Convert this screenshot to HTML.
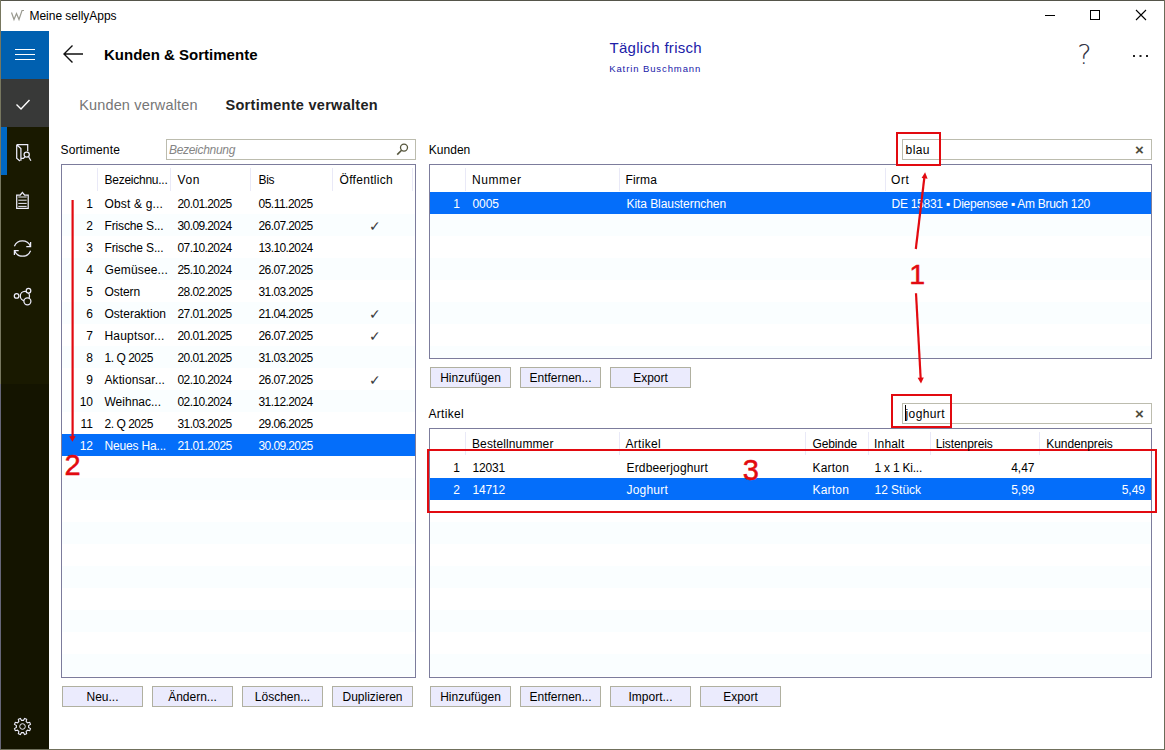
<!DOCTYPE html>
<html lang="de"><head><meta charset="utf-8"><title>Meine sellyApps</title>
<style>
html,body{margin:0;padding:0;}
body{width:1165px;height:750px;position:relative;overflow:hidden;background:#fff;font-family:"Liberation Sans", sans-serif;}
.a{position:absolute;}
.t{position:absolute;white-space:nowrap;line-height:1;}
svg{position:absolute;left:0;top:0;}
</style></head><body>
<div class="a" style="left:0px;top:0px;width:1165px;height:1px;background:#55554a;"></div>
<div class="a" style="left:0px;top:0px;width:1px;height:384px;background:#77775f;"></div>
<div class="a" style="left:0px;top:384px;width:1px;height:366px;background:#666678;"></div>
<div class="a" style="left:1164px;top:0px;width:1px;height:750px;background:#6b6b58;"></div>
<div class="a" style="left:0px;top:749px;width:1165px;height:1px;background:#70705c;"></div>
<div class="a" style="left:1px;top:31px;width:48px;height:48px;background:#0060b0;"></div>
<div class="a" style="left:1px;top:79px;width:48px;height:48px;background:#383938;"></div>
<div class="a" style="left:1px;top:127px;width:48px;height:257px;background:#191900;"></div>
<div class="a" style="left:1px;top:384px;width:48px;height:365px;background:#141400;"></div>
<div class="a" style="left:1px;top:127px;width:6px;height:48px;background:#0068c4;"></div>
<div class="a" style="left:166px;top:139px;width:250px;height:21px;background:#fff;border:1px solid #bcbcae;box-sizing:border-box;"></div>
<div class="a" style="left:61px;top:164px;width:355px;height:514px;background:#fff;border:1px solid #7c7c9c;box-sizing:border-box;"></div>
<div class="a" style="left:62px;top:214px;width:353px;height:22px;background:#fafeff;"></div>
<div class="a" style="left:62px;top:258px;width:353px;height:22px;background:#fafeff;"></div>
<div class="a" style="left:62px;top:302px;width:353px;height:22px;background:#fafeff;"></div>
<div class="a" style="left:62px;top:346px;width:353px;height:22px;background:#fafeff;"></div>
<div class="a" style="left:62px;top:390px;width:353px;height:22px;background:#fafeff;"></div>
<div class="a" style="left:62px;top:434px;width:353px;height:22px;background:#fafeff;"></div>
<div class="a" style="left:62px;top:478px;width:353px;height:22px;background:#fafeff;"></div>
<div class="a" style="left:62px;top:522px;width:353px;height:22px;background:#fafeff;"></div>
<div class="a" style="left:62px;top:566px;width:353px;height:22px;background:#fafeff;"></div>
<div class="a" style="left:62px;top:610px;width:353px;height:22px;background:#fafeff;"></div>
<div class="a" style="left:62px;top:654px;width:353px;height:22px;background:#fafeff;"></div>
<div class="a" style="left:62px;top:434px;width:353px;height:22px;background:#046efa;"></div>
<div class="a" style="left:97px;top:168px;width:1px;height:23px;background:#e9e9f7;"></div>
<div class="a" style="left:170px;top:168px;width:1px;height:23px;background:#e9e9f7;"></div>
<div class="a" style="left:250px;top:168px;width:1px;height:23px;background:#e9e9f7;"></div>
<div class="a" style="left:332px;top:168px;width:1px;height:23px;background:#e9e9f7;"></div>
<div class="a" style="left:412px;top:168px;width:1px;height:23px;background:#e9e9f7;"></div>
<div class="a" style="left:62px;top:686px;width:81px;height:21px;background:#ebebfd;border:1px solid #b0b0a0;box-sizing:border-box;"></div>
<div class="a" style="left:152px;top:686px;width:81px;height:21px;background:#ebebfd;border:1px solid #b0b0a0;box-sizing:border-box;"></div>
<div class="a" style="left:242px;top:686px;width:81px;height:21px;background:#ebebfd;border:1px solid #b0b0a0;box-sizing:border-box;"></div>
<div class="a" style="left:332px;top:686px;width:81px;height:21px;background:#ebebfd;border:1px solid #b0b0a0;box-sizing:border-box;"></div>
<div class="a" style="left:902px;top:139px;width:250px;height:21px;background:#fff;border:1px solid #bcbcae;box-sizing:border-box;"></div>
<div class="a" style="left:429px;top:164px;width:723px;height:195px;background:#fff;border:1px solid #7c7c9c;box-sizing:border-box;"></div>
<div class="a" style="left:430px;top:214px;width:721px;height:22px;background:#fafeff;"></div>
<div class="a" style="left:430px;top:258px;width:721px;height:22px;background:#fafeff;"></div>
<div class="a" style="left:430px;top:302px;width:721px;height:22px;background:#fafeff;"></div>
<div class="a" style="left:430px;top:346px;width:721px;height:12px;background:#fafeff;"></div>
<div class="a" style="left:430px;top:192px;width:721px;height:22px;background:#046efa;"></div>
<div class="a" style="left:465px;top:168px;width:1px;height:23px;background:#e9e9f7;"></div>
<div class="a" style="left:619px;top:168px;width:1px;height:23px;background:#e9e9f7;"></div>
<div class="a" style="left:885px;top:168px;width:1px;height:23px;background:#e9e9f7;"></div>
<div class="a" style="left:430px;top:367px;width:81px;height:21px;background:#ebebfd;border:1px solid #b0b0a0;box-sizing:border-box;"></div>
<div class="a" style="left:520px;top:367px;width:81px;height:21px;background:#ebebfd;border:1px solid #b0b0a0;box-sizing:border-box;"></div>
<div class="a" style="left:610px;top:367px;width:81px;height:21px;background:#ebebfd;border:1px solid #b0b0a0;box-sizing:border-box;"></div>
<div class="a" style="left:902px;top:403px;width:250px;height:21px;background:#fff;border:1px solid #bcbcae;box-sizing:border-box;"></div>
<div class="a" style="left:905px;top:405px;width:1px;height:16px;background:#000;"></div>
<div class="a" style="left:429px;top:428px;width:723px;height:250px;background:#fff;border:1px solid #7c7c9c;box-sizing:border-box;"></div>
<div class="a" style="left:430px;top:478px;width:721px;height:22px;background:#fafeff;"></div>
<div class="a" style="left:430px;top:522px;width:721px;height:22px;background:#fafeff;"></div>
<div class="a" style="left:430px;top:566px;width:721px;height:22px;background:#fafeff;"></div>
<div class="a" style="left:430px;top:610px;width:721px;height:22px;background:#fafeff;"></div>
<div class="a" style="left:430px;top:654px;width:721px;height:22px;background:#fafeff;"></div>
<div class="a" style="left:465px;top:432px;width:1px;height:23px;background:#e9e9f7;"></div>
<div class="a" style="left:619px;top:432px;width:1px;height:23px;background:#e9e9f7;"></div>
<div class="a" style="left:805px;top:432px;width:1px;height:23px;background:#e9e9f7;"></div>
<div class="a" style="left:868px;top:432px;width:1px;height:23px;background:#e9e9f7;"></div>
<div class="a" style="left:930px;top:432px;width:1px;height:23px;background:#e9e9f7;"></div>
<div class="a" style="left:1039px;top:432px;width:1px;height:23px;background:#e9e9f7;"></div>
<div class="a" style="left:427px;top:449px;width:730px;height:64px;border:2px solid #e20a10;box-sizing:border-box;"></div>
<div class="a" style="left:430px;top:478px;width:721px;height:22px;background:#046efa;"></div>
<div class="a" style="left:430px;top:686px;width:81px;height:21px;background:#ebebfd;border:1px solid #b0b0a0;box-sizing:border-box;"></div>
<div class="a" style="left:520px;top:686px;width:81px;height:21px;background:#ebebfd;border:1px solid #b0b0a0;box-sizing:border-box;"></div>
<div class="a" style="left:610px;top:686px;width:81px;height:21px;background:#ebebfd;border:1px solid #b0b0a0;box-sizing:border-box;"></div>
<div class="a" style="left:700px;top:686px;width:81px;height:21px;background:#ebebfd;border:1px solid #b0b0a0;box-sizing:border-box;"></div>
<div class="a" style="left:896px;top:132px;width:45px;height:34px;border:2px solid #e20a10;box-sizing:border-box;"></div>
<div class="a" style="left:891px;top:394px;width:61px;height:34px;border:2px solid #e20a10;box-sizing:border-box;"></div>

<span class="t" id="t0" style="top:9.84px;font-size:12px;color:#000;left:29.5px;letter-spacing:-0.025px;">Meine sellyApps</span>
<span class="t" id="t1" style="top:47.00px;font-size:15px;color:#000;font-weight:700;left:104.0px;letter-spacing:0.008px;">Kunden &amp; Sortimente</span>
<span class="t" id="t2" style="top:39.70px;font-size:15px;color:#2020a8;left:609.5px;letter-spacing:0.296px;">Täglich frisch</span>
<span class="t" id="t3" style="top:63.86px;font-size:9.5px;color:#2020a8;left:609.2px;letter-spacing:0.898px;">Katrin Buschmann</span>
<span class="t" id="t4" style="top:98.13px;font-size:14.5px;color:#767676;left:79.2px;letter-spacing:0.151px;">Kunden verwalten</span>
<span class="t" id="t5" style="top:98.13px;font-size:14.5px;color:#222;font-weight:700;left:225.5px;letter-spacing:0.291px;">Sortimente verwalten</span>
<span class="t" id="t6" style="top:41.44px;font-size:27px;color:#333344;font-weight:200;left:1084.5px;transform:translateX(-50%);font-family:'DejaVu Sans',sans-serif;">?</span>
<span class="t" id="t7" style="top:143.84px;font-size:12px;color:#000;left:60.5px;letter-spacing:0.147px;">Sortimente</span>
<span class="t" id="t8" style="top:143.84px;font-size:12px;color:#858585;font-style:italic;left:169.0px;letter-spacing:-0.308px;">Bezeichnung</span>
<span class="t" id="t9" style="top:173.84px;font-size:12px;color:#000;left:104.5px;letter-spacing:-0.254px;">Bezeichnu...</span>
<span class="t" id="t10" style="top:173.84px;font-size:12px;color:#000;left:177.5px;letter-spacing:0.599px;">Von</span>
<span class="t" id="t11" style="top:173.84px;font-size:12px;color:#000;left:258.5px;letter-spacing:-0.324px;">Bis</span>
<span class="t" id="t12" style="top:173.84px;font-size:12px;color:#000;left:339.5px;letter-spacing:0.302px;">Öffentlich</span>
<span class="t" id="t13" style="top:197.54px;font-size:12px;color:#000;right:1072px;">1</span>
<span class="t" id="t14" style="top:197.54px;font-size:12px;color:#000;left:104.5px;letter-spacing:0.163px;">Obst &amp; g...</span>
<span class="t" id="t15" style="top:197.54px;font-size:12px;color:#000;left:177.5px;letter-spacing:-0.596px;">20.01.2025</span>
<span class="t" id="t16" style="top:197.54px;font-size:12px;color:#000;left:258.5px;letter-spacing:-0.507px;">05.11.2025</span>
<span class="t" id="t17" style="top:219.54px;font-size:12px;color:#000;right:1072px;">2</span>
<span class="t" id="t18" style="top:219.54px;font-size:12px;color:#000;left:104.5px;letter-spacing:-0.141px;">Frische S...</span>
<span class="t" id="t19" style="top:219.54px;font-size:12px;color:#000;left:177.5px;letter-spacing:-0.596px;">30.09.2024</span>
<span class="t" id="t20" style="top:219.54px;font-size:12px;color:#000;left:258.5px;letter-spacing:-0.596px;">26.07.2025</span>
<span class="t" id="t21" style="top:218.65px;font-size:14px;color:#3a3a3a;left:374.6px;transform:translateX(-50%);">✓</span>
<span class="t" id="t22" style="top:241.54px;font-size:12px;color:#000;right:1072px;">3</span>
<span class="t" id="t23" style="top:241.54px;font-size:12px;color:#000;left:104.5px;letter-spacing:-0.141px;">Frische S...</span>
<span class="t" id="t24" style="top:241.54px;font-size:12px;color:#000;left:177.5px;letter-spacing:-0.596px;">07.10.2024</span>
<span class="t" id="t25" style="top:241.54px;font-size:12px;color:#000;left:258.5px;letter-spacing:-0.596px;">13.10.2024</span>
<span class="t" id="t26" style="top:263.54px;font-size:12px;color:#000;right:1072px;">4</span>
<span class="t" id="t27" style="top:263.54px;font-size:12px;color:#000;left:104.5px;letter-spacing:0.147px;">Gemüsee...</span>
<span class="t" id="t28" style="top:263.54px;font-size:12px;color:#000;left:177.5px;letter-spacing:-0.596px;">25.10.2024</span>
<span class="t" id="t29" style="top:263.54px;font-size:12px;color:#000;left:258.5px;letter-spacing:-0.596px;">26.07.2025</span>
<span class="t" id="t30" style="top:285.54px;font-size:12px;color:#000;right:1072px;">5</span>
<span class="t" id="t31" style="top:285.54px;font-size:12px;color:#000;left:104.5px;letter-spacing:-0.086px;">Ostern</span>
<span class="t" id="t32" style="top:285.54px;font-size:12px;color:#000;left:177.5px;letter-spacing:-0.596px;">28.02.2025</span>
<span class="t" id="t33" style="top:285.54px;font-size:12px;color:#000;left:258.5px;letter-spacing:-0.596px;">31.03.2025</span>
<span class="t" id="t34" style="top:307.54px;font-size:12px;color:#000;right:1072px;">6</span>
<span class="t" id="t35" style="top:307.54px;font-size:12px;color:#000;left:104.5px;letter-spacing:0.013px;">Osteraktion</span>
<span class="t" id="t36" style="top:307.54px;font-size:12px;color:#000;left:177.5px;letter-spacing:-0.596px;">27.01.2025</span>
<span class="t" id="t37" style="top:307.54px;font-size:12px;color:#000;left:258.5px;letter-spacing:-0.596px;">21.04.2025</span>
<span class="t" id="t38" style="top:306.65px;font-size:14px;color:#3a3a3a;left:374.6px;transform:translateX(-50%);">✓</span>
<span class="t" id="t39" style="top:329.54px;font-size:12px;color:#000;right:1072px;">7</span>
<span class="t" id="t40" style="top:329.54px;font-size:12px;color:#000;left:104.5px;letter-spacing:0.179px;">Hauptsor...</span>
<span class="t" id="t41" style="top:329.54px;font-size:12px;color:#000;left:177.5px;letter-spacing:-0.596px;">20.01.2025</span>
<span class="t" id="t42" style="top:329.54px;font-size:12px;color:#000;left:258.5px;letter-spacing:-0.596px;">26.07.2025</span>
<span class="t" id="t43" style="top:328.65px;font-size:14px;color:#3a3a3a;left:374.6px;transform:translateX(-50%);">✓</span>
<span class="t" id="t44" style="top:351.54px;font-size:12px;color:#000;right:1072px;">8</span>
<span class="t" id="t45" style="top:351.54px;font-size:12px;color:#000;left:104.5px;letter-spacing:-0.469px;">1. Q 2025</span>
<span class="t" id="t46" style="top:351.54px;font-size:12px;color:#000;left:177.5px;letter-spacing:-0.596px;">20.01.2025</span>
<span class="t" id="t47" style="top:351.54px;font-size:12px;color:#000;left:258.5px;letter-spacing:-0.596px;">31.03.2025</span>
<span class="t" id="t48" style="top:373.54px;font-size:12px;color:#000;right:1072px;">9</span>
<span class="t" id="t49" style="top:373.54px;font-size:12px;color:#000;left:104.5px;letter-spacing:0.094px;">Aktionsar...</span>
<span class="t" id="t50" style="top:373.54px;font-size:12px;color:#000;left:177.5px;letter-spacing:-0.596px;">02.10.2024</span>
<span class="t" id="t51" style="top:373.54px;font-size:12px;color:#000;left:258.5px;letter-spacing:-0.596px;">26.07.2025</span>
<span class="t" id="t52" style="top:372.65px;font-size:14px;color:#3a3a3a;left:374.6px;transform:translateX(-50%);">✓</span>
<span class="t" id="t53" style="top:395.54px;font-size:12px;color:#000;right:1072px;">10</span>
<span class="t" id="t54" style="top:395.54px;font-size:12px;color:#000;left:104.5px;letter-spacing:0.002px;">Weihnac...</span>
<span class="t" id="t55" style="top:395.54px;font-size:12px;color:#000;left:177.5px;letter-spacing:-0.596px;">02.10.2024</span>
<span class="t" id="t56" style="top:395.54px;font-size:12px;color:#000;left:258.5px;letter-spacing:-0.596px;">31.12.2024</span>
<span class="t" id="t57" style="top:417.54px;font-size:12px;color:#000;right:1072px;">11</span>
<span class="t" id="t58" style="top:417.54px;font-size:12px;color:#000;left:104.5px;letter-spacing:-0.469px;">2. Q 2025</span>
<span class="t" id="t59" style="top:417.54px;font-size:12px;color:#000;left:177.5px;letter-spacing:-0.596px;">31.03.2025</span>
<span class="t" id="t60" style="top:417.54px;font-size:12px;color:#000;left:258.5px;letter-spacing:-0.596px;">29.06.2025</span>
<span class="t" id="t61" style="top:439.54px;font-size:12px;color:#fff;right:1072px;">12</span>
<span class="t" id="t62" style="top:439.54px;font-size:12px;color:#fff;left:104.5px;letter-spacing:-0.170px;">Neues Ha...</span>
<span class="t" id="t63" style="top:439.54px;font-size:12px;color:#fff;left:177.5px;letter-spacing:-0.596px;">21.01.2025</span>
<span class="t" id="t64" style="top:439.54px;font-size:12px;color:#fff;left:258.5px;letter-spacing:-0.596px;">30.09.2025</span>
<span class="t" id="t65" style="top:690.84px;font-size:12px;color:#000;left:102.5px;transform:translateX(-50%);">Neu...</span>
<span class="t" id="t66" style="top:690.84px;font-size:12px;color:#000;left:192.5px;transform:translateX(-50%);">Ändern...</span>
<span class="t" id="t67" style="top:690.84px;font-size:12px;color:#000;left:282.5px;transform:translateX(-50%);">Löschen...</span>
<span class="t" id="t68" style="top:690.84px;font-size:12px;color:#000;left:372.5px;transform:translateX(-50%);">Duplizieren</span>
<span class="t" id="t69" style="top:143.84px;font-size:12px;color:#000;left:428.8px;letter-spacing:0.021px;">Kunden</span>
<span class="t" id="t70" style="top:143.84px;font-size:12px;color:#000;left:905.5px;letter-spacing:0.453px;">blau</span>
<span class="t" id="t71" style="top:142.30px;font-size:15px;color:#4c4c3a;font-weight:700;left:1139.3px;transform:translateX(-50%);">×</span>
<span class="t" id="t72" style="top:173.84px;font-size:12px;color:#000;left:472.0px;letter-spacing:0.581px;">Nummer</span>
<span class="t" id="t73" style="top:173.84px;font-size:12px;color:#000;left:625.5px;letter-spacing:0.166px;">Firma</span>
<span class="t" id="t74" style="top:173.84px;font-size:12px;color:#000;left:891.0px;letter-spacing:0.609px;">Ort</span>
<span class="t" id="t75" style="top:197.54px;font-size:12px;color:#fff;right:705px;">1</span>
<span class="t" id="t76" style="top:197.54px;font-size:12px;color:#fff;left:472.5px;letter-spacing:-0.051px;">0005</span>
<span class="t" id="t77" style="top:197.54px;font-size:12px;color:#fff;left:626.5px;letter-spacing:-0.069px;">Kita Blausternchen</span>
<span class="t" id="t78" style="top:197.54px;font-size:12px;color:#fff;left:891.5px;letter-spacing:-0.271px;">DE 15831 ▪ Diepensee ▪ Am Bruch 120</span>
<span class="t" id="t79" style="top:371.84px;font-size:12px;color:#000;left:470.5px;transform:translateX(-50%);">Hinzufügen</span>
<span class="t" id="t80" style="top:371.84px;font-size:12px;color:#000;left:560.5px;transform:translateX(-50%);">Entfernen...</span>
<span class="t" id="t81" style="top:371.84px;font-size:12px;color:#000;left:650.5px;transform:translateX(-50%);">Export</span>
<span class="t" id="t82" style="top:407.84px;font-size:12px;color:#000;left:428.5px;letter-spacing:0.308px;">Artikel</span>
<span class="t" id="t83" style="top:407.84px;font-size:12px;color:#000;left:905.5px;letter-spacing:0.400px;">joghurt</span>
<span class="t" id="t84" style="top:406.30px;font-size:15px;color:#4c4c3a;font-weight:700;left:1139.3px;transform:translateX(-50%);">×</span>
<span class="t" id="t85" style="top:437.84px;font-size:12px;color:#000;left:472.0px;letter-spacing:0.113px;">Bestellnummer</span>
<span class="t" id="t86" style="top:437.84px;font-size:12px;color:#000;left:625.5px;letter-spacing:0.308px;">Artikel</span>
<span class="t" id="t87" style="top:437.84px;font-size:12px;color:#000;left:812.5px;letter-spacing:-0.125px;">Gebinde</span>
<span class="t" id="t88" style="top:437.84px;font-size:12px;color:#000;left:874.0px;letter-spacing:0.190px;">Inhalt</span>
<span class="t" id="t89" style="top:437.84px;font-size:12px;color:#000;left:935.7px;letter-spacing:-0.085px;">Listenpreis</span>
<span class="t" id="t90" style="top:437.84px;font-size:12px;color:#000;left:1046.3px;letter-spacing:-0.081px;">Kundenpreis</span>
<span class="t" id="t91" style="top:461.54px;font-size:12px;color:#000;right:705px;">1</span>
<span class="t" id="t92" style="top:461.54px;font-size:12px;color:#000;left:472.5px;letter-spacing:-0.175px;">12031</span>
<span class="t" id="t93" style="top:461.54px;font-size:12px;color:#000;left:626.5px;letter-spacing:0.151px;">Erdbeerjoghurt</span>
<span class="t" id="t94" style="top:461.54px;font-size:12px;color:#000;left:812.5px;letter-spacing:0.190px;">Karton</span>
<span class="t" id="t95" style="top:461.54px;font-size:12px;color:#000;left:874.5px;letter-spacing:-0.230px;">1 x 1 Ki...</span>
<span class="t" id="t96" style="top:461.54px;font-size:12px;color:#000;right:130.5px;">4,47</span>
<span class="t" id="t97" style="top:483.54px;font-size:12px;color:#fff;right:705px;">2</span>
<span class="t" id="t98" style="top:483.54px;font-size:12px;color:#fff;left:472.5px;letter-spacing:-0.175px;">14712</span>
<span class="t" id="t99" style="top:483.54px;font-size:12px;color:#fff;left:626.5px;letter-spacing:0.210px;">Joghurt</span>
<span class="t" id="t100" style="top:483.54px;font-size:12px;color:#fff;left:812.5px;letter-spacing:0.190px;">Karton</span>
<span class="t" id="t101" style="top:483.54px;font-size:12px;color:#fff;left:874.5px;letter-spacing:-0.025px;">12 Stück</span>
<span class="t" id="t102" style="top:483.54px;font-size:12px;color:#fff;right:130.5px;">5,99</span>
<span class="t" id="t103" style="top:483.54px;font-size:12px;color:#fff;right:20px;">5,49</span>
<span class="t" id="t104" style="top:690.84px;font-size:12px;color:#000;left:470.5px;transform:translateX(-50%);">Hinzufügen</span>
<span class="t" id="t105" style="top:690.84px;font-size:12px;color:#000;left:560.5px;transform:translateX(-50%);">Entfernen...</span>
<span class="t" id="t106" style="top:690.84px;font-size:12px;color:#000;left:650.5px;transform:translateX(-50%);">Import...</span>
<span class="t" id="t107" style="top:690.84px;font-size:12px;color:#000;left:740.5px;transform:translateX(-50%);">Export</span>
<span class="t" id="t108" style="top:260.07px;font-size:28.5px;color:#e20a10;left:917.2px;transform:translateX(-50%);-webkit-text-stroke:0.5px #e20a10;">1</span>
<span class="t" id="t109" style="top:450.75px;font-size:29px;color:#e20a10;left:72.7px;transform:translateX(-50%);-webkit-text-stroke:0.5px #e20a10;">2</span>
<span class="t" id="t110" style="top:456.45px;font-size:29px;color:#e20a10;left:750.8px;transform:translateX(-50%);-webkit-text-stroke:0.5px #e20a10;">3</span>
<svg width="1165" height="750" viewBox="0 0 1165 750" fill="none">
<!-- window controls -->
<path d="M1045 15.5h10" stroke="#000" stroke-width="1"/>
<rect x="1090.5" y="10.5" width="9" height="9" stroke="#000" stroke-width="1"/>
<path d="M1136 10l10 10M1146 10l-10 10" stroke="#000" stroke-width="1.1"/>
<!-- more dots -->
<rect x="1133" y="55" width="2" height="2" fill="#222"/><rect x="1139.5" y="55" width="2" height="2" fill="#222"/><rect x="1146" y="55" width="2" height="2" fill="#222"/>
<!-- hamburger -->
<path d="M15 49.5h20M15 54.5h20M15 59.5h20" stroke="#fff" stroke-width="1"/>
<!-- back arrow -->
<path d="M83 54H64.5M72.5 45.5l-8.5 8.5 8.5 8.5" stroke="#111" stroke-width="1.4"/>
<!-- check -->
<path d="M16.5 104.5l4.5 4.5 8.5 -9" stroke="#fff" stroke-width="1.4"/>
<!-- title icon -->
<path d="M11.5 12.5l2.5 7 2.5 -6 2.5 6 3 -9h2" stroke="#9a9a90" stroke-width="1.2"/>
<!-- sidebar icons -->
<g stroke="#ececfa" stroke-width="1.25" fill="none">
<path d="M16.7 144.7h11v6.6M16.7 144.7v13.6l3.2 2.6M16.7 144.7l4.2 3.8v12.3M20.9 158.4h3"/>
<circle cx="26.7" cy="154.6" r="2.6"/>
<path d="M23.3 158.6l1.6 -1.8M28.6 156.8l2.3 3.9"/>
<path d="M16.7 195h3.6l2.1 -2.6 2.1 2.6h3.7v13.3h-11.5z"/>
<path d="M18.3 197h8.4M18.3 200.2h8.4M18.3 203.4h8.4M18.3 206.4h8.4" stroke-width="1"/>
<path d="M14.4 246.3a8.6 8.6 0 0 1 16 0M30.6 242v4.5h-4.3"/>
<path d="M30.6 250.8a8.6 8.6 0 0 1 -16 0M14.4 255v-4.4h4.3"/>
<circle cx="16.6" cy="295.9" r="2.3"/>
<circle cx="24.9" cy="296" r="4.6"/>
<circle cx="28.5" cy="290.7" r="2.3" fill="#191900"/>
<circle cx="27.4" cy="301.3" r="3.5" fill="#191900"/>
<circle cx="22.5" cy="726.5" r="2.8" stroke-width="1"/>
<path d="M28.62 727.47 L30.52 728.63 L29.68 730.67 L27.52 730.14 L26.14 731.52 L26.67 733.68 L24.63 734.52 L23.47 732.62 L21.53 732.62 L20.37 734.52 L18.33 733.68 L18.86 731.52 L17.48 730.14 L15.32 730.67 L14.48 728.63 L16.38 727.47 L16.38 725.53 L14.48 724.37 L15.32 722.33 L17.48 722.86 L18.86 721.48 L18.33 719.32 L20.37 718.48 L21.53 720.38 L23.47 720.38 L24.63 718.48 L26.67 719.32 L26.14 721.48 L27.52 722.86 L29.68 722.33 L30.52 724.37 L28.62 725.53Z" stroke-width="1.1"/>
</g>
<!-- magnifier -->
<circle cx="404" cy="147.6" r="3.5" stroke="#55553c" stroke-width="1.3"/>
<path d="M401.6 150.2l-4.4 4.4" stroke="#55553c" stroke-width="1.6"/>
<!-- red arrows -->
<path d="M72.6 200V438" stroke="#e20a10" stroke-width="2.2"/>
<path d="M72.4 441.8l-3.2 -5.6h6.4z" fill="#e20a10"/>
<path d="M915.8 249L924.3 178" stroke="#e20a10" stroke-width="2.2"/>
<path d="M925.1 172.2l2.5 6.6l-6 -0.8z" fill="#e20a10"/>
<path d="M916 293.3L920.7 379" stroke="#e20a10" stroke-width="2.2"/>
<path d="M921 383.4l-3.4 -5.6l6.2 -0.4z" fill="#e20a10"/>
</svg>
</body></html>
